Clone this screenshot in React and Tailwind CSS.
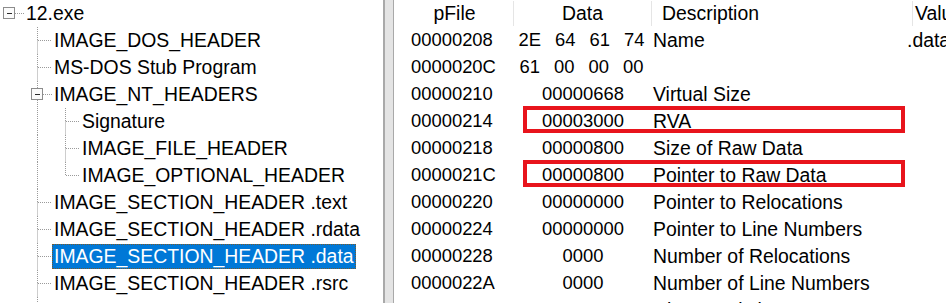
import React from 'react';

const tree = [
  { level: 0, text: '12.exe', box: true, next: false, anc: [] },
  { level: 1, text: 'IMAGE_DOS_HEADER', next: true, anc: [] },
  { level: 1, text: 'MS-DOS Stub Program', next: true, anc: [] },
  { level: 1, text: 'IMAGE_NT_HEADERS', box: true, next: true, anc: [] },
  { level: 2, text: 'Signature', next: true, anc: [1] },
  { level: 2, text: 'IMAGE_FILE_HEADER', next: true, anc: [1] },
  { level: 2, text: 'IMAGE_OPTIONAL_HEADER', next: false, anc: [1] },
  { level: 1, text: 'IMAGE_SECTION_HEADER .text', next: true, anc: [] },
  { level: 1, text: 'IMAGE_SECTION_HEADER .rdata', next: true, anc: [] },
  { level: 1, text: 'IMAGE_SECTION_HEADER .data', next: true, anc: [], selected: true },
  { level: 1, text: 'IMAGE_SECTION_HEADER .rsrc', next: true, anc: [] },
  { level: 1, text: 'SECTION .text', next: true, anc: [] },
];

const rows = [
  ['00000208', ['2E', '64', '61', '74'], 'Name', '.data'],
  ['0000020C', ['61', '00', '00', '00'], '', ''],
  ['00000210', '00000668', 'Virtual Size', ''],
  ['00000214', '00003000', 'RVA', ''],
  ['00000218', '00000800', 'Size of Raw Data', ''],
  ['0000021C', '00000800', 'Pointer to Raw Data', ''],
  ['00000220', '00000000', 'Pointer to Relocations', ''],
  ['00000224', '00000000', 'Pointer to Line Numbers', ''],
  ['00000228', '0000', 'Number of Relocations', ''],
  ['0000022A', '0000', 'Number of Line Numbers', ''],
  ['0000022C', 'C0000040', 'Characteristics', ''],
];

const DOT = { stroke: '#9a9a9a', strokeWidth: 1, strokeDasharray: '1 1' };

/* Connector lines drawn for one tree row (Windows TreeView style). */
const Lines = ({ level, box, next, anc }) => {
  const xc = 9 + 28 * level;
  const x = xc + 0.5;
  const w = 24 + 28 * level;
  return (
    <svg width={w} height="27" className="shrink-0">
      {anc.map((k) => (
        <line key={k} x1={9 + 28 * k + 0.5} y1="0" x2={9 + 28 * k + 0.5} y2="27" {...DOT} />
      ))}
      {level > 0 && <line x1={x} y1="0" x2={x} y2={box ? 7 : 13.5} {...DOT} />}
      {level > 0 && next && <line x1={x} y1={box ? 19 : 13.5} x2={x} y2="27" {...DOT} />}
      <line x1={box ? xc + 6 : xc + 1} y1="13.5" x2={xc + 15} y2="13.5" {...DOT} />
      {box && (
        <>
          <rect x={xc - 5.5} y="7.5" width="11" height="11" fill="#fbfbfb" stroke="#8c8c8c" />
          <line x1={xc - 2} y1="13.5" x2={xc + 3} y2="13.5" stroke="#2a2a2a" strokeWidth="1" />
        </>
      )}
    </svg>
  );
};

const App = () => {
  return (
    <div className="flex w-[946px] h-[303px] overflow-hidden bg-white text-black font-['Liberation_Sans',Arial,sans-serif] text-[19.4px] leading-none">
      {/* tree */}
      <div className="w-[383px] shrink-0 overflow-hidden">
        {tree.map((n) => (
          <div key={n.text} className="flex h-[27px] items-stretch whitespace-nowrap">
            <Lines {...n} />
            {n.selected ? (
              <span className="flex items-center px-[1px] my-[1px] bg-[#0078d7] text-white border border-dotted border-[#7a5a2a]">
                {n.text}
              </span>
            ) : (
              <span className="flex items-center px-[2px]">{n.text}</span>
            )}
          </div>
        ))}
      </div>

      {/* splitter */}
      <div className="w-[11px] shrink-0 border-l-2 border-r border-[#a9a9a9] bg-[#e4e4e4]" />

      {/* list view */}
      <div className="relative flex-1 overflow-hidden">
        <div className="flex h-[27px] whitespace-nowrap">
          <div className="w-[120px] shrink-0 flex items-center justify-center pl-[2px] border-r border-[#e5e5e5] my-[1px]">pFile</div>
          <div className="w-[138px] shrink-0 flex items-center justify-center border-r border-[#e5e5e5] my-[1px]">Data</div>
          <div className="w-[261px] shrink-0 flex items-center pl-[10px] border-r border-[#e5e5e5] my-[1px]">Description</div>
          <div className="flex-1 flex items-center pl-[2px]">Value</div>
        </div>
        {rows.map(([pf, data, desc, val]) => (
          <div key={pf} className="flex h-[27px] items-center whitespace-nowrap">
            <div className="w-[120px] shrink-0 pl-[17px] text-[18.4px]">{pf}</div>
            <div className="w-[138px] shrink-0 flex justify-center gap-[14px] text-[18.4px] pr-[3px]">
              {Array.isArray(data) ? data.map((b, i) => <span key={i}>{b}</span>) : <span className="pl-[3px]">{data}</span>}
            </div>
            <div className="w-[254px] shrink-0 pl-[1px]">{desc}</div>
            <div className="flex-1 pl-[1px]">{val}</div>
          </div>
        ))}

        {/* red annotation boxes */}
        <div className="absolute left-[129px] top-[106px] w-[382px] h-[27px] border-4 border-[#e8141c]" />
        <div className="absolute left-[129px] top-[160px] w-[382px] h-[27px] border-4 border-[#e8141c]" />
      </div>
    </div>
  );
};

export default App;
